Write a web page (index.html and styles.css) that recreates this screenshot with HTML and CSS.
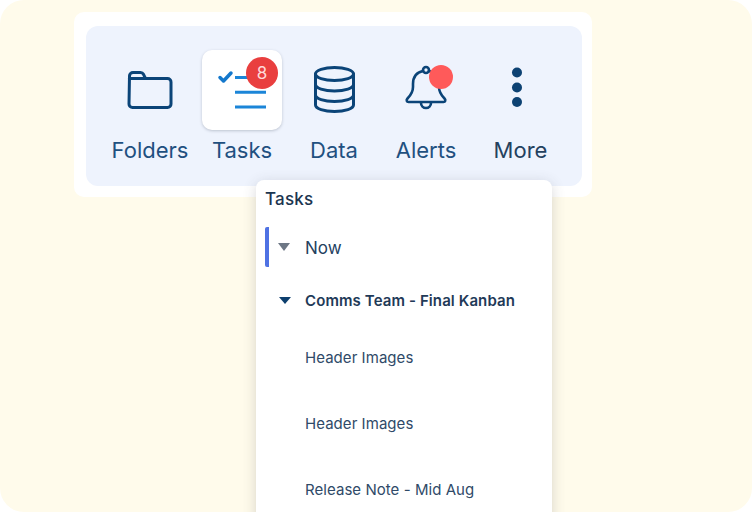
FILE: index.html
```html
<!DOCTYPE html>
<html lang="en">
<head>
    <meta charset="UTF-8">
    <meta name="viewport" content="width=device-width, initial-scale=1.0">
    <title>Toolbar Tasks Menu</title>
    <link rel="stylesheet" href="styles.css">
</head>
<body>
    <div class="screen">
        <div class="toolbar-card">
            <nav class="toolbar">
                <div class="tool">
                    <div class="tool-icon">
                        <svg class="icon" viewBox="0 0 80 80">
                            <path d="M19.5 26a3.5 3.5 0 0 1 3.5-3.5h7.500a3.500 3.500 0 0 1 3 1.800l2 4.200h22a3.500 3.500 0 0 1 3.500 3.500v22a3.500 3.500 0 0 1-3.500 3.500h-35a3.500 3.500 0 0 1-3.500-3.500z"/>
                            <path d="M19.500 28.500h16"/>
                        </svg>
                    </div>
                    <span class="tool-label">Folders</span>
                </div>
                <div class="tool">
                    <div class="tool-icon tool-icon-active">
                        <svg class="icon icon-tasks" viewBox="0 0 80 80">
                            <path class="check" d="M18 27.500l3.500 3.500 7.500-8"/>
                            <path class="lines" d="M33 27.500h14M33 42.300h31M33 57h31"/>
                        </svg>
                        <span class="count-badge">8</span>
                    </div>
                    <span class="tool-label">Tasks</span>
                </div>
                <div class="tool">
                    <div class="tool-icon">
                        <svg class="icon" viewBox="0 0 80 80">
                            <ellipse cx="40.500" cy="24" rx="19" ry="6.500"/>
                            <path d="M21.500 24v31c0 3.600 8.500 6.500 19 6.500s19-2.900 19-6.500V24"/>
                            <path d="M21.500 34.500c0 3.600 8.500 6.500 19 6.500s19-2.900 19-6.500M21.500 45c0 3.600 8.500 6.500 19 6.500s19-2.900 19-6.500"/>
                        </svg>
                    </div>
                    <span class="tool-label">Data</span>
                </div>
                <div class="tool">
                    <div class="tool-icon">
                        <svg class="icon icon-bell" viewBox="0 0 80 80">
                            <circle cx="40" cy="20" r="3"/>
                            <path d="M37 21c-7 1.500-10 7-10 13v3c0 5.500-2.500 8.500-5.500 11.500-1.500 1.500-.8 3.500 1 3.500h35c1.800 0 2.500-2 1-3.500-3-3-5.500-6-5.500-11.500v-3c0-6-3-11.500-10-13"/>
                            <path d="M35 53a5 5 0 1 0 10 0"/>
                        </svg>
                        <span class="alert-dot"></span>
                    </div>
                    <span class="tool-label">Alerts</span>
                </div>
                <div class="tool">
                    <div class="tool-icon">
                        <svg class="icon icon-dots" viewBox="0 0 80 80">
                            <circle cx="39" cy="22.500" r="5"/>
                            <circle cx="39" cy="37.500" r="5"/>
                            <circle cx="39" cy="52" r="5"/>
                        </svg>
                    </div>
                    <span class="tool-label tool-label-more">More</span>
                </div>
            </nav>
        </div>

        <div class="tasks-menu">
            <h4 class="menu-title">Tasks</h4>
            <div class="menu-group">
                <span class="arrow arrow-grey"></span>
                <span class="group-name">Now</span>
            </div>
            <div class="menu-team">
                <span class="arrow arrow-navy"></span>
                <span class="team-name">Comms Team - Final Kanban</span>
            </div>
            <div class="menu-item">Header Images</div>
            <div class="menu-item">Header Images</div>
            <div class="menu-item">Release Note - Mid Aug</div>
        </div>
    </div>
</body>
</html>
```

FILE: styles.css
```css
/* Page frame */
body {
    margin: 0;
    background-color: #fff;
    font-family: 'Inter', sans-serif;
}
.screen {
    position: relative;
    width: 752px;
    height: 512px;
    box-sizing: border-box;
    padding: 12px 0 0 74px;
    background-color: #fffbeb;
    border-radius: 24px;
    overflow: hidden;
}

/* Toolbar */
.toolbar-card {
    width: 518px;
    box-sizing: border-box;
    padding: 14px 10px 11px 12px;
    background-color: #fff;
    border-radius: 10px;
}
.toolbar {
    display: flex;
    gap: 12px;
    height: 160px;
    box-sizing: border-box;
    padding: 24px 24px 0;
    background-color: #eef3fd;
    border-radius: 12px;
}
.tool {
    width: 80px;
    display: flex;
    flex-direction: column;
    align-items: center;
}
.tool-icon {
    position: relative;
    width: 80px;
    height: 80px;
    border-radius: 10px;
}
.tool-icon-active {
    background-color: #fff;
    box-shadow: 0 1px 3px rgba(40, 50, 70, 0.25);
}
.icon {
    display: block;
    width: 80px;
    height: 80px;
    fill: none;
    stroke: #0b4478;
    stroke-width: 3;
    stroke-linecap: round;
    stroke-linejoin: round;
}
.icon-tasks {
    stroke: #1b85d8;
}
.icon-tasks .check {
    stroke: #1478cc;
    stroke-width: 3.5;
}
.icon-tasks .lines {
    stroke-linecap: butt;
}
.icon-bell {
    stroke-width: 2.6;
}
.icon-dots {
    fill: #0d4273;
    stroke: none;
}
.count-badge {
    position: absolute;
    top: 7px;
    left: 44px;
    width: 32px;
    height: 32px;
    border-radius: 50%;
    background-color: #e93f3f;
    color: #ffd9d9;
    font-size: 17px;
    line-height: 32px;
    text-align: center;
}
.alert-dot {
    position: absolute;
    top: 15px;
    left: 43px;
    width: 24px;
    height: 24px;
    border-radius: 50%;
    background-color: #ff5a5a;
}
.tool-label {
    margin-top: 6px;
    color: #1f5080;
    font-size: 22px;
    line-height: 28px;
    white-space: nowrap;
}
.tool-label-more {
    margin-left: 5px;
    color: #24415f;
}

/* Tasks dropdown */
.tasks-menu {
    position: absolute;
    top: 180px;
    left: 256px;
    width: 296px;
    height: 360px;
    box-sizing: border-box;
    padding: 9px 9px 0;
    background-color: #fff;
    border-radius: 8px;
    box-shadow: 0 3px 14px rgba(60, 60, 70, 0.2);
}
.menu-title {
    margin: 0;
    color: #1c3550;
    font-size: 17px;
    font-weight: 500;
    line-height: 20px;
    letter-spacing: 0.2px;
}
.menu-group {
    display: flex;
    align-items: center;
    height: 40px;
    margin-top: 18px;
    border-left: 4px solid #4f72e3;
    border-radius: 2px;
    box-sizing: border-box;
}
.group-name {
    margin-left: 15px;
    padding-top: 1px;
    color: #24415f;
    font-size: 17px;
}
.menu-team {
    display: flex;
    align-items: center;
    height: 20px;
    margin-top: 23px;
}
.team-name {
    margin-left: 14px;
    color: #1f3a58;
    font-size: 15px;
    font-weight: 600;
    letter-spacing: 0.1px;
}
.arrow {
    width: 0;
    height: 0;
    border-left: 6.5px solid transparent;
    border-right: 6.5px solid transparent;
}
.arrow-grey {
    margin-left: 9px;
    border-top: 8px solid #6d7785;
}
.arrow-navy {
    margin-left: 14px;
    border-top: 7px solid #0d3f6e;
}
.menu-item {
    height: 66px;
    padding-left: 40px;
    color: #2f4a68;
    font-size: 15px;
    line-height: 20px;
    letter-spacing: 0.05px;
}
.menu-team + .menu-item {
    margin-top: 38px;
}
```
